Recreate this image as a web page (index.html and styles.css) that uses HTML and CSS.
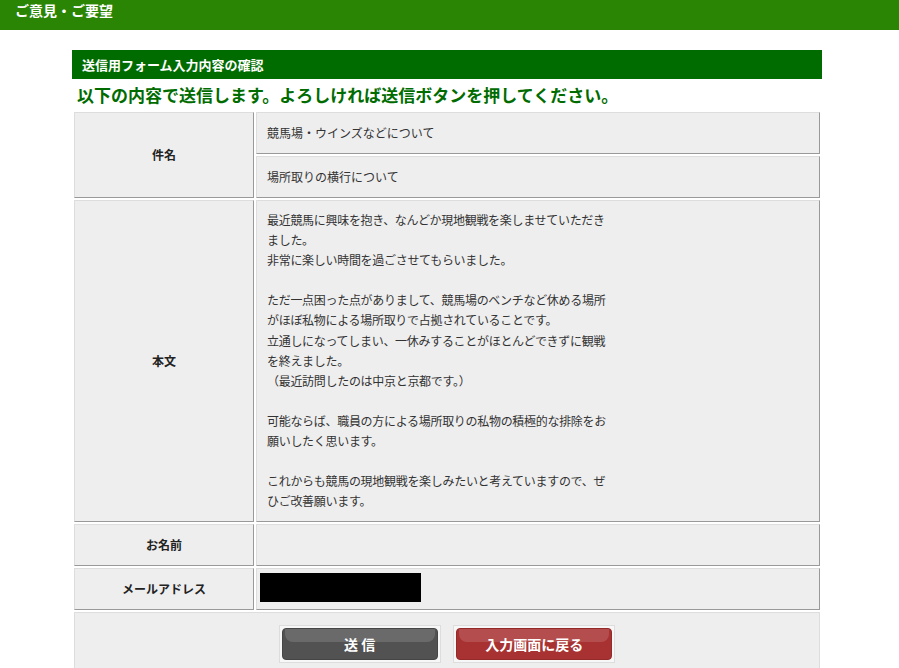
FILE: index.html
```html
<!DOCTYPE html>
<html lang="ja">
<head>
    <meta charset="UTF-8">
    <meta name="viewport" content="width=device-width, initial-scale=1.0">
    <title>ご意見・ご要望</title>
    <link rel="stylesheet" href="styles.css">
</head>
<body>
    <div class="topbar">ご意見・ご要望</div>
    <div class="main">
        <h2 class="section-title">送信用フォーム入力内容の確認</h2>
        <p class="lead">以下の内容で送信します。よろしければ送信ボタンを押してください。</p>
        <table class="confirm">
            <tr>
                <th rowspan="2">件名</th>
                <td>競馬場・ウインズなどについて</td>
            </tr>
            <tr>
                <td>場所取りの横行について</td>
            </tr>
            <tr>
                <th>本文</th>
                <td class="body-text">最近競馬に興味を抱き、なんどか現地観戦を楽しませていただき<br>ました。<br>非常に楽しい時間を過ごさせてもらいました。<br><br>ただ一点困った点がありまして、競馬場のベンチなど休める場所<br>がほぼ私物による場所取りで占拠されていることです。<br>立通しになってしまい、一休みすることがほとんどできずに観戦<br>を終えました。<br>（最近訪問したのは中京と京都です。）<br><br>可能ならば、職員の方による場所取りの私物の積極的な排除をお<br>願いしたく思います。<br><br>これからも競馬の現地観戦を楽しみたいと考えていますので、ぜ<br>ひご改善願います。</td>
            </tr>
            <tr>
                <th>お名前</th>
                <td></td>
            </tr>
            <tr>
                <th>メールアドレス</th>
                <td class="mail"><div class="redacted"></div></td>
            </tr>
            <tr>
                <td colspan="2" class="actions">
                    <span class="btn-frame"><button class="btn send">送 信</button></span>
                    <span class="btn-frame"><button class="btn back">入力画面に戻る</button></span>
                </td>
            </tr>
        </table>
    </div>
</body>
</html>
```

FILE: styles.css
```css
* {
  margin: 0;
  padding: 0;
  box-sizing: border-box;
}
body {
  font-family: "Noto Sans CJK JP", "Noto Sans", sans-serif;
  color: #333;
  background: #fff;
}
.topbar {
  height: 30px;
  background-color: #2a8505;
  color: #fff;
  font-size: 14px;
  font-weight: bold;
  line-height: 20px;
  padding-left: 15px;
}
.main {
  width: 750px;
  margin: 20px 0 0 72px;
}
.section-title {
  height: 29px;
  background-color: #006c00;
  color: #fff;
  font-size: 13px;
  font-weight: bold;
  line-height: 29px;
  padding-left: 10px;
}
.lead {
  color: #006c00;
  font-size: 17px;
  font-weight: bold;
  line-height: 31px;
  padding-left: 5px;
}
.confirm {
  width: 100%;
  border-spacing: 2px;
  font-size: 12px;
}
.confirm th,
.confirm td {
  background-color: #eee;
  border: 1px solid;
  border-color: #ddd #999 #999 #ddd;
  line-height: 20px;
}
.confirm th {
  width: 180px;
  font-weight: bold;
  color: #222;
  text-align: center;
  vertical-align: middle;
}
.confirm td {
  padding: 10px 10px;
  text-align: left;
  vertical-align: middle;
  height: 42px;
}
.confirm td.body-text {
  vertical-align: top;
  padding: 9px 10px 10px;
  line-height: 20.1px;
  letter-spacing: -0.3px;
  color: #333;
}
.confirm td.mail {
  padding: 4px 3px 7px;
}
.redacted {
  width: 161px;
  height: 29px;
  background: #000;
}
.confirm td.actions {
  text-align: center;
  padding: 12px 0 14px;
  border-color: #ddd;
}
.btn-frame {
  display: inline-block;
  padding: 2px;
  border: 1px solid #ddd;
  background: #f7f7f7;
  margin: 0 5px;
  vertical-align: top;
}
.btn {
  position: relative;
  display: block;
  width: 156px;
  height: 32px;
  border: 1px solid #444;
  border-radius: 4px;
  color: #fff;
  font-family: "Noto Sans CJK JP", sans-serif;
  font-size: 14px;
  font-weight: bold;
  cursor: pointer;
  overflow: hidden;
}
.btn::before {
  content: "";
  position: absolute;
  left: 2px;
  right: 2px;
  top: 0;
  height: 13px;
  border-radius: 0 0 8px 8px;
  background: rgba(255, 255, 255, 0.14);
}
.btn.send {
  background-color: #525252;
  border-color: #464646;
}
.btn.back {
  background-color: #a83232;
  border-color: #952a2a;
}
```
